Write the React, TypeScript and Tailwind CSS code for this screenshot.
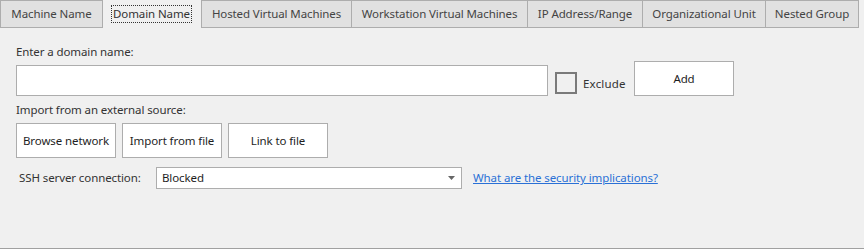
import React from 'react'

const tabs = [
    { label: 'Machine Name', w: 'w-[103px]' },
    { label: 'Domain Name', w: 'w-[99px]', active: true },
    { label: 'Hosted Virtual Machines', w: 'w-[151px]' },
    { label: 'Workstation Virtual Machines', w: 'w-[177px]' },
    { label: 'IP Address/Range', w: 'w-[116px]' },
    { label: 'Organizational Unit', w: 'w-[124px]' },
    { label: 'Nested Group', w: 'w-[94px]' },
]

const Btn = ({ children, className }: { children: React.ReactNode; className: string }) => (
    <div className={`flex items-center justify-center bg-white border border-[#adadad] text-[#1e1e1e] ${className}`}>{children}</div>
)

const App = () => {
    return (
        <div className="w-[864px] h-[249px] bg-[#f0f0f0] text-[11.5px] tracking-[-0.1px] text-[#333] font-['Segoe_UI','Noto_Sans',sans-serif] flex flex-col overflow-hidden">
            <div className="flex h-[28px] shrink-0">
                {tabs.map((t) =>
                    t.active ? (
                        <div key={t.label} className={`${t.w} flex items-center justify-center`}>
                            <span className="border border-dotted border-[#333] px-[1px] leading-[16px]">{t.label}</span>
                        </div>
                    ) : (
                        <div key={t.label} className={`${t.w} -mr-px flex items-center justify-center bg-[#e1e1e1] border border-[#adadad] text-[#444]`}>
                            {t.label}
                        </div>
                    )
                )}
            </div>
            <div className="flex-1 border-b border-[#a0a0a0] pl-4 pt-[16px]">
                <div className="leading-[16px]">Enter a domain name:</div>
                <div className="flex items-start mt-[1px]">
                    <div className="w-[532px] h-[31px] mt-[4px] bg-white border border-[#adadad]" />
                    <div className="w-[22px] h-[22px] ml-[7px] mt-[11px] border-2 border-[#7a7a7a] bg-[#f0f0f0]" />
                    <div className="w-[57px] pl-[6px] mt-[15px] leading-[16px] tracking-[0.2px]">Exclude</div>
                    <Btn className="w-[100px] h-[35px]">Add</Btn>
                </div>
                <div className="leading-[16px] mt-[6px]">Import from an external source:</div>
                <div className="flex gap-[6px] mt-[5px]">
                    <Btn className="w-[100px] h-[35px]">Browse network</Btn>
                    <Btn className="w-[100px] h-[35px]">Import from file</Btn>
                    <Btn className="w-[100px] h-[35px]">Link to file</Btn>
                </div>
                <div className="flex items-center mt-[9px]">
                    <div className="w-[140px] pl-[3px]">SSH server connection:</div>
                    <div className="w-[306px] h-[22px] bg-white border border-[#adadad] flex items-center justify-between pl-[5px] pr-[5px] text-[#1e1e1e]">
                        <span>Blocked</span>
                        <svg width="8" height="4" viewBox="0 0 8 4"><path d="M0 0H7L3.5 4Z" fill="#666" /></svg>
                    </div>
                    <a className="ml-[11px] text-[#2a70d6] underline cursor-pointer">What are the security implications?</a>
                </div>
            </div>
        </div>
    )
}

export default App
